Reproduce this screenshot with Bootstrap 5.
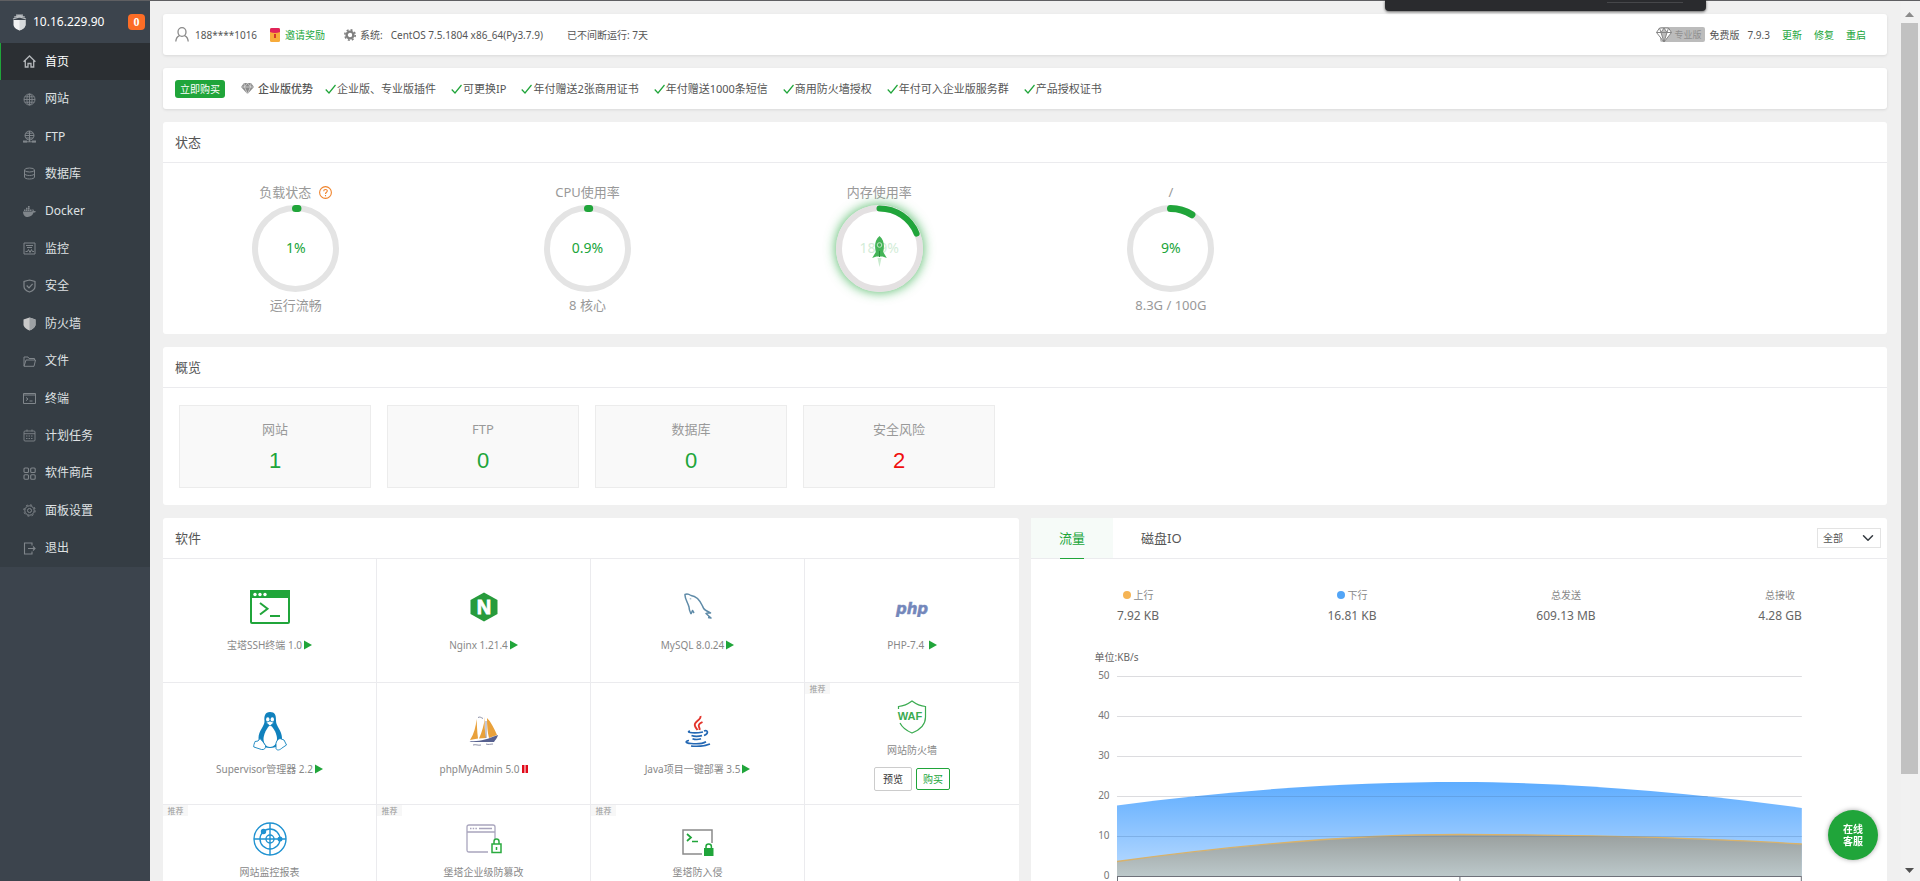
<!DOCTYPE html>
<html lang="zh-CN">
<head>
<meta charset="utf-8">
<meta name="viewport" content="width=device-width, initial-scale=1">
<title>宝塔面板</title>
<link href="https://cdn.jsdelivr.net/npm/bootstrap@5.3.0/dist/css/bootstrap.min.css" rel="stylesheet">
<style>
:root { --green: #20a53a; --line: #ebebee; }
body { font-family: "Noto Sans", "Noto Sans CJK SC", sans-serif; font-size: 12px; line-height: 20px; color: #555; background: #f0f0f0; border-top: 1px solid #5f5f62; }
a { text-decoration: none; color: inherit; }
svg { display: block; flex: none; }
.t-10 { font-size: 10px; }
.t-11 { font-size: 11px; }
.green { color: var(--green); }

.side { width: 150px; background: #3c444d; color: #fff; }
.side-head { height: 42px; padding: 0 5px 0 12px; gap: 6px; }
.side-head .num { width: 17px; border-radius: 4px; background: #fc6d26; font: bold 12px/16px "Liberation Serif", serif; text-align: center; }
.menu { height: 524px; background: #353d44; }
.menu a { display: flex; flex: 1; align-items: center; gap: 9px; padding-left: 22px; color: #dfe1e3; border-left: 1px solid transparent; }
.menu a svg { color: #80868b; }
.menu a.active { background: #2b2f33; color: #fff; border-left-color: var(--green); }
.menu a.active svg { color: #b4b7ba; }

.main { padding: 13px 14px 0 13px; gap: 13px; }
.panel { background: #fff; border-radius: 3px; }
.bar { height: 41px; padding: 0 21px 0 12px; box-shadow: 0 1px 3px rgba(0,0,0,.1); }
.panel-title { height: 41px; padding: 0 12px; border-bottom: 1px solid var(--line); line-height: 41px; font-size: 13px; }
.user { width: 80px; padding-left: 6px; }
.gear { margin-left: 19px; }
.perks { gap: 15px; }
.perks span { display: flex; align-items: center; gap: 1px; }
.btn-buy { background: var(--green); color: #fff; border: 0; border-radius: 3px; font-size: 10px; line-height: 18px; padding: 0 5px; }
.pro-tag { background: #bcbcbc; color: #8f8f8f; border-radius: 2px; font-size: 9px; line-height: 15px; padding: 0 4px 0 14px; margin-left: -12px; }

.rings { display: grid; grid-template-columns: repeat(6, 1fr); gap: 26px; padding: 19px 0; color: #999; font-size: 13px; text-align: center; }
.ring { width: 87px; height: 87px; margin: 3px auto; border-radius: 50%; position: relative; }
.ring span { position: absolute; inset: 0; line-height: 85px; font-size: 14px; color: var(--green); }
.ring.hot { box-shadow: 0 0 11px 1px rgba(32,165,58,.7), inset 0 0 3px rgba(32,165,58,.3); }
.ring.hot span { opacity: .2; }
.ring .rocket { position: absolute; left: 36px; top: 31px; }

.tiles { gap: 16px; padding: 17px 16px; }
.tile { width: 192px; border: 1px solid #ececec; background: #f9f9f9; padding: 13px 0 11px; text-align: center; color: #999; font-size: 13px; }
.tile b { display: block; margin-top: 7px; font: 22px/30px "Liberation Sans", sans-serif; color: var(--green); }
.tile b.warn { color: #f00f0f; }

.halves { display: grid; grid-template-columns: 1fr 1fr; gap: 12px; }
.soft { display: grid; grid-template-columns: repeat(4, 1fr); grid-template-rows: 124px; grid-auto-rows: 122px; font-size: 10px; color: #888; }
.soft > div { border-right: 1px solid var(--line); border-bottom: 1px solid var(--line); padding-top: 28px; display: flex; flex-direction: column; align-items: center; gap: 8px; position: relative; }
.soft > div:nth-child(4n) { border-right: 0; }
.soft > div.promo { padding-top: 14px; gap: 3px; }
.soft .pic { height: 40px; display: flex; align-items: center; }
.soft .tag { position: absolute; left: 0; top: 0; width: 25px; background: #f7f7f7; color: #999; font-size: 8px; line-height: 11px; text-align: center; }
.soft .label { display: flex; align-items: center; gap: 2px; }
.btn-mini { font-size: 10px; line-height: 20px; padding: 1px 8px; border-radius: 2px; border: 1px solid #ccc; background: #fff; color: #333; }
.btn-mini.go { border-color: var(--green); color: var(--green); padding: 0 6px; }

.tabs { height: 41px; border-bottom: 1px solid var(--line); font-size: 13px; padding-right: 6px; }
.tabs button { border: 0; background: none; height: 40px; padding: 0 28px; color: #555; position: relative; }
.tabs button.active { background: #f6fbf8; color: var(--green); }
.tabs button.active::after { content: ""; position: absolute; left: 29px; right: 29px; bottom: -1px; height: 1px; background: var(--green); }
.pick { width: 64px; height: 20px; padding: 0 5px; border: 1px solid #e3e3e3; border-radius: 0; font-size: 10px; line-height: 18px; color: #555; background-position: right 6px center; background-size: 12px 12px; }
.stats { padding-top: 26px; }
.stats .col { color: #888; font-size: 10px; text-align: center; }
.stats .col strong { display: block; font-weight: 400; font-size: 12px; line-height: 22px; color: #666; }
.dot { width: 8px; height: 8px; border-radius: 50%; display: inline-block; margin-right: 3px; }
.unit { margin-top: 22px; padding-left: calc(10% - 22px); font-size: 10px; line-height: 16px; color: #666; }
.chart { display: grid; grid-template-columns: 10% 1fr 10%; }
.chart .ticks { display: flex; flex-direction: column; gap: 20px; padding-right: 7px; text-align: right; font-size: 10px; color: #777; }
.chart svg { width: 100%; height: 206px; margin-top: 11px; overflow: visible; }
.chart path { vector-effect: non-scaling-stroke; }

.track { width: 19px; padding: 11px 2px 8px 0; background: #f1f1f1; }
.track i { display: block; width: 17px; height: 751px; margin: 6px 0 auto; background: #c1c1c1; }
.help { position: fixed; right: 42px; bottom: 21px; width: 50px; height: 50px; border: 0; border-radius: 50%; background: var(--green); color: #fff; font-size: 10px; font-weight: 700; line-height: 12px; box-shadow: 0 0 5px rgba(0,0,0,.35); z-index: 3; }
.notice { position: fixed; top: 0; right: 214px; width: 321px; height: 11px; background: #2a2b2e; border-radius: 0 0 4px 4px; box-shadow: 0 1px 3px rgba(0,0,0,.6); z-index: 3; padding: 2px 23px; }
.notice i { display: block; width: 76px; height: 1px; margin-left: auto; background: #46474a; }
</style>
</head>
<body class="vh-100 overflow-hidden d-flex">

<svg class="d-none" aria-hidden="true">
  <symbol id="play" viewBox="0 0 8 10"><path d="M0 0.500 8 5 0 9.500z" fill="#20a53a"/></symbol>
  <symbol id="tick" viewBox="0 0 11 10"><path d="M.7 5.500 4 9 10.500 1" fill="none" stroke="#20a53a" stroke-width="1.200"/></symbol>
</svg>

<nav class="side flex-shrink-0">
  <div class="side-head d-flex align-items-center">
    <svg width="15" height="17" viewBox="0 0 15 17"><path d="M1.500 6h12v4.500c0 3-3 5-6 6-3-1-6-3-6-6z" fill="#f2f2f2"/><path d="M7.500 6h6v4.500c0 3-3 5-6 6z" fill="#d5d8da"/><path d="M1 5 7.500 3 14 5M2 3l5.500-1L13 3M4 1.200h7" stroke="#b9bdc1" fill="none" stroke-width="1.200"/></svg>
    <span class="me-auto">10.16.229.90</span><span class="num">0</span>
  </div>
  <div class="menu d-flex flex-column">
    <a href="#" class="active"><svg width="13" height="13" viewBox="0 0 13 13" fill="none" stroke="currentColor" stroke-width="1.300"><path d="M.6 6.800 6.500 1l5.900 5.800M2.300 5.500v6.500h2.700V8.500h3V12h2.700V5.500"/></svg>首页</a>
    <a href="#"><svg width="13" height="13" viewBox="0 0 13 13" fill="none" stroke="currentColor" stroke-width=".9"><circle cx="6.500" cy="6.500" r="5.500"/><ellipse cx="6.500" cy="6.500" rx="2.600" ry="5.500"/><path d="M6.500 1v11M1 6.500h11M1.800 3.800h9.400M1.800 9.200h9.400"/></svg>网站</a>
    <a href="#"><svg width="13" height="13" viewBox="0 0 13 13" fill="none" stroke="currentColor"><circle cx="6.500" cy="5.500" r="4.500"/><path d="M6.500 1v11M2 5.500h9M3 3.200h7M3 8h7M.5 11.800h12"/><path d="M0 10.500h4v2H0zM9 10.500h4v2H9z" fill="currentColor" stroke="none"/></svg>FTP</a>
    <a href="#"><svg width="13" height="13" viewBox="0 0 13 13" fill="none" stroke="currentColor"><ellipse cx="6.500" cy="3" rx="5" ry="2"/><path d="M1.500 3v7c0 1.200 2 2 5 2s5-.8 5-2V3M1.500 6.500c0 1.200 2 2 5 2s5-.8 5-2"/></svg>数据库</a>
    <a href="#"><svg width="13" height="13" viewBox="0 0 13 13" fill="currentColor"><path d="M0 6.500h9.200c.4-.2.600-1.800.2-2.500 1 .3 1.400 1.200 1.500 2 .8-.2 1.700 0 2.100.4-.5.900-1.400 1.200-2.400 1.200C9.500 10.500 7.500 12 4.800 12 1.800 12 0 10 0 6.500zM1 4.600h1.600V6H1zM3 4.600h1.600V6H3zM5 4.600h1.600V6H5zM7 4.600h1.500V6H7zM3 2.800h1.600v1.400H3zM5 2.800h1.600v1.400H5zM5 1h1.600v1.400H5z"/></svg>Docker</a>
    <a href="#"><svg width="13" height="13" viewBox="0 0 13 13" fill="none" stroke="currentColor"><path d="M1 1h11v11H1zM3 3.500h7M4 5.500h5M2.500 9.500h2l1-2 1.500 3 1.500-3 .8 2h1.700"/></svg>监控</a>
    <a href="#"><svg width="13" height="14" viewBox="0 0 13 14" fill="none" stroke="currentColor" stroke-width="1.200"><path d="M6.500 1 12 2.500v5c0 2.500-2.500 4.500-5.500 5.500C3.500 12 1 10 1 7.500v-5z"/><path d="m3.700 6.500 2.300 2.300 3.600-4"/></svg>安全</a>
    <a href="#"><svg width="13" height="14" viewBox="0 0 13 14"><path d="M6.500 .500 12.500 2.500v5c0 2.500-3 5-6 6-3-1-6-3.500-6-6v-5z" fill="#c9c9c9"/><path d="M6.500 .500 12.500 2.500v5c0 2.500-3 5-6 6z" fill="#9da1a4"/></svg>防火墙</a>
    <a href="#"><svg width="13" height="13" viewBox="0 0 13 13" fill="none" stroke="currentColor"><path d="M1 11V2h4l1 1.500h5.500V5M1 11.300 3 5h9.500l-1.500 6.300z"/></svg>文件</a>
    <a href="#"><svg width="13" height="13" viewBox="0 0 13 13" fill="none" stroke="currentColor"><path d="M.5 1.500h12v10H.5zM.5 3h12M3 5.500l2 1.500-2 1.700M6.500 9h3"/></svg>终端</a>
    <a href="#"><svg width="13" height="13" viewBox="0 0 13 13" fill="none" stroke="currentColor" stroke-width=".9"><rect x="1" y="2" width="11" height="10" rx="1"/><path d="M1 4.700h11M4 .5v2M9 .5v2"/><path d="M3 7h7.500M3 9.500h7.500" stroke-dasharray="1.500 1"/></svg>计划任务</a>
    <a href="#"><svg width="13" height="13" viewBox="0 0 13 13" fill="none" stroke="currentColor" stroke-width="1.100"><rect x="1" y="1" width="4.500" height="4.500" rx="1"/><rect x="7.700" y="1" width="4.500" height="4.500" rx="1"/><rect x="1" y="7.700" width="4.500" height="4.500" rx="1"/><rect x="7.700" y="7.700" width="4.500" height="4.500" rx="1"/></svg>软件商店</a>
    <a href="#"><svg width="13" height="13" viewBox="0 0 13 13" fill="none" stroke="currentColor"><circle cx="6.500" cy="6.500" r="4.700"/><circle cx="6.500" cy="6.500" r="2"/><circle cx="6.500" cy="6.500" r="5.700" stroke-dasharray="2 2.480"/></svg>面板设置</a>
    <a href="#"><svg width="13" height="13" viewBox="0 0 13 13" fill="none" stroke="currentColor" stroke-width="1.100"><path d="M9 3.500V1H1.500v11H9V9.500M5 6.500h7M10 4.500l2 2-2 2"/></svg>退出</a>
  </div>
</nav>

<main class="main flex-fill d-flex flex-column">
  <header class="panel bar d-flex align-items-center t-10 flex-shrink-0">
    <svg width="14" height="15" viewBox="0 0 14 15" fill="none" stroke="#8a8a8a" stroke-width="1.300"><ellipse cx="7" cy="5" rx="4" ry="4.300"/><path d="M.8 14.500C1 11.500 2.500 9.500 4.500 8.700M13.200 14.500C13 11.500 11.500 9.500 9.500 8.700"/></svg>
    <span class="user">188****1016</span>
    <svg width="12" height="14" viewBox="0 0 12 14"><rect x="1" width="10" height="14" rx="1.500" fill="#f7ab3a"/><path d="M1 1.500Q1 0 2.500 0h7Q11 0 11 1.500V4Q6 6 1 4z" fill="#e0235a"/><path d="M5 6h2v4H5z" fill="#d23b2a"/></svg>
    <a href="#" class="green ms-1">邀请奖励</a>
    <svg class="gear" width="12" height="12" viewBox="0 0 12 12"><circle cx="6" cy="6" r="3.400" fill="none" stroke="#808080" stroke-width="2.400"/><circle cx="6" cy="6" r="5.200" fill="none" stroke="#808080" stroke-width="1.600" stroke-dasharray="2 2.080"/></svg>
    <span class="ms-1">系统:</span><span class="ms-2">CentOS 7.5.1804 x86_64(Py3.7.9)</span>
    <span class="ms-4 me-auto">已不间断运行: 7天</span>
    <svg class="position-relative" width="16" height="16" viewBox="0 0 16 16" fill="#fff" stroke="#858585"><path d="M3.500 1h9L15.500 5.500 8 15 .5 5.500zM.5 5.500h15M5 5.500 8 15l3-9.500L8 1 5 5.500 3.500 1M11 5.500 12.500 1"/></svg>
    <span class="pro-tag">专业版</span>
    <span class="mx-1">免费版</span><span class="ms-1">7.9.3</span>
    <a href="#" class="green ms-2 ps-1">更新</a><a href="#" class="green ms-2 ps-1">修复</a><a href="#" class="green ms-2 ps-1">重启</a>
  </header>

  <section class="panel bar d-flex align-items-center t-11 flex-shrink-0">
    <button class="btn-buy me-3">立即购买</button>
    <svg width="13" height="11" viewBox="0 0 13 11"><path d="M3 0h7l3 4-6.500 7L0 4z" fill="#8a8a8a"/><path d="M0 4h13M3.500 4l3 7 3-7L6.500 0l-3 4M3 0l.5 4M10 0l-.5 4" stroke="#ddd" stroke-width=".7" fill="none"/></svg>
    <span class="me-2 pe-1 ps-1 fw-medium">企业版优势</span>
    <div class="perks d-flex">
      <span><svg width="11" height="10"><use href="#tick"/></svg>企业版、专业版插件</span>
      <span><svg width="11" height="10"><use href="#tick"/></svg>可更换IP</span>
      <span><svg width="11" height="10"><use href="#tick"/></svg>年付赠送2张商用证书</span>
      <span><svg width="11" height="10"><use href="#tick"/></svg>年付赠送1000条短信</span>
      <span><svg width="11" height="10"><use href="#tick"/></svg>商用防火墙授权</span>
      <span><svg width="11" height="10"><use href="#tick"/></svg>年付可入企业版服务群</span>
      <span><svg width="11" height="10"><use href="#tick"/></svg>产品授权证书</span>
    </div>
  </section>

  <section class="panel flex-shrink-0">
    <div class="panel-title">状态</div>
    <div class="rings">
      <div>
        <div class="d-flex justify-content-center align-items-center gap-2">负载状态
          <svg width="13" height="13" viewBox="0 0 13 13" fill="none" stroke="#f0842c" stroke-width="1.100"><circle cx="6.500" cy="6.500" r="5.900"/><path d="M4.700 5.200c0-2.400 3.700-2.200 3.600-.2C8.200 6.300 6.500 6.300 6.500 8M6.500 9v1.200"/></svg></div>
        <div class="ring"><svg width="87" height="87" viewBox="0 0 87 87" fill="none"><circle cx="43.500" cy="43.500" r="40.500" stroke="#e4e4e4" stroke-width="6"/><circle cx="43.500" cy="43.500" r="40" stroke="#20a53a" stroke-width="7" stroke-linecap="round" pathLength="100" stroke-dasharray="1 99" transform="rotate(-90 43.500 43.500)"/></svg><span>1%</span></div>
        <div>运行流畅</div>
      </div>
      <div>
        <div>CPU使用率</div>
        <div class="ring"><svg width="87" height="87" viewBox="0 0 87 87" fill="none"><circle cx="43.500" cy="43.500" r="40.500" stroke="#e4e4e4" stroke-width="6"/><circle cx="43.500" cy="43.500" r="40" stroke="#20a53a" stroke-width="7" stroke-linecap="round" pathLength="100" stroke-dasharray=".9 99.100" transform="rotate(-90 43.500 43.500)"/></svg><span>0.9%</span></div>
        <div>8 核心</div>
      </div>
      <div>
        <div>内存使用率</div>
        <div class="ring hot"><svg width="87" height="87" viewBox="0 0 87 87" fill="none"><circle cx="43.500" cy="43.500" r="40.500" stroke="#e4e1e2" stroke-width="6"/><circle cx="43.500" cy="43.500" r="40" stroke="#20a53a" stroke-width="6" stroke-linecap="round" pathLength="100" stroke-dasharray="18.900 81.100" transform="rotate(-90 43.500 43.500)"/></svg><span>18.9%</span>
          <svg class="rocket" width="15" height="31" viewBox="0 0 15 31"><path d="M7.500 0c5 4.500 5 10 3.700 16l3.600 6-4.200-1.500H4.400L.2 22l3.600-6C2.500 10 2.500 4.500 7.500 0z" fill="#43b457"/><circle cx="7.500" cy="9" r="2.300" fill="none" stroke="#bfe6c5"/><path d="M7.500 15v6" stroke="#2b8d3e"/><path d="M5.500 22h4l-2 9z" fill="#c9ebcf"/></svg></div>
      </div>
      <div>
        <div>/</div>
        <div class="ring"><svg width="87" height="87" viewBox="0 0 87 87" fill="none"><circle cx="43.500" cy="43.500" r="40.500" stroke="#e4e4e4" stroke-width="6"/><circle cx="43.500" cy="43.500" r="40" stroke="#20a53a" stroke-width="7" stroke-linecap="round" pathLength="100" stroke-dasharray="9 91" transform="rotate(-90 43.500 43.500)"/></svg><span>9%</span></div>
        <div>8.3G / 100G</div>
      </div>
    </div>
  </section>

  <section class="panel flex-shrink-0">
    <div class="panel-title">概览</div>
    <div class="tiles d-flex">
      <a href="#" class="tile">网站<b>1</b></a>
      <a href="#" class="tile">FTP<b>0</b></a>
      <a href="#" class="tile">数据库<b>0</b></a>
      <a href="#" class="tile">安全风险<b class="warn">2</b></a>
    </div>
  </section>

  <div class="halves flex-fill">
    <section class="panel">
      <div class="panel-title">软件</div>
      <div class="soft">
        <div><div class="pic"><svg width="40" height="34" viewBox="0 0 40 34"><rect x="1" y="1" width="38" height="32" rx="1" fill="#fff" stroke="#20a53a" stroke-width="2"/><path d="M0 0h40v8H0z" fill="#20a53a"/><g fill="#fff"><circle cx="5" cy="4.500" r="1.700"/><circle cx="10" cy="4.500" r="1.700"/><circle cx="15" cy="4.500" r="1.700"/></g><path d="m10 13 7.500 5.700L10 24.500M20 26h10" fill="none" stroke="#20a53a" stroke-width="2"/></svg></div>
          <span class="label">宝塔SSH终端 1.0<svg width="8" height="10"><use href="#play"/></svg></span></div>
        <div><div class="pic"><svg width="28" height="30" viewBox="0 0 28 30"><path d="M14 .5 27.500 8v14L14 29.500.500 22V8z" fill="#279b3c"/><text x="14" y="22" text-anchor="middle" font-family="Liberation Sans" font-weight="bold" font-size="20" fill="#fff" stroke="#fff" stroke-width=".8">N</text></svg></div>
          <span class="label">Nginx 1.21.4<svg width="8" height="10"><use href="#play"/></svg></span></div>
        <div><div class="pic"><svg width="28" height="28" viewBox="0 0 28 28" fill="none" stroke="#5f8ba8" stroke-width="1.500" stroke-linejoin="round"><path d="M7 21c-1-2-2-4-2-7C3.500 9 .500 5 1 1.500 3 .5 5.500 1.500 7 2.500c5 .5 9 5 11.500 10.500.8 2.500 2 4 3.500 4.500l4.500 2.500c-2 .2-4 0-4.500.5l5 4.500-3-.5M7 21l1.500-3.500 1.500 2.500M6.500 5.500v.8"/></svg></div>
          <span class="label">MySQL 8.0.24<svg width="8" height="10"><use href="#play"/></svg></span></div>
        <div><div class="pic"><svg width="36" height="20" viewBox="0 0 36 20"><text x="18" y="17" text-anchor="middle" font-family="DejaVu Sans" font-weight="bold" font-style="italic" font-size="15" fill="#7487bb" stroke="#7487bb" stroke-width=".5">php</text></svg></div>
          <span class="label">PHP-7.4&nbsp;<svg width="8" height="10"><use href="#play"/></svg></span></div>

        <div><div class="pic"><svg width="34" height="40" viewBox="0 0 34 40"><path d="M17 1c-5 0-6 4-5.500 9 .2 5-6 10-6 17 0 5 4 10 11.500 10s12-5 12-10c0-7-6-12-6-17C23.200 4 22 1 17 1z" fill="#1081bd"/><path d="M17 14c-3 3-6.500 9-6.500 14s3 8 6.500 8 7-3 7-8-3-11-7-14z" fill="#fff"/><ellipse cx="14.800" cy="8.500" rx="1.700" ry="2.300" fill="#fff"/><ellipse cx="19.300" cy="8.500" rx="1.700" ry="2.300" fill="#fff"/><path d="m13 11.500 4-1.500 4 1.500-4 3.500z" fill="#fff" stroke="#1081bd" stroke-width=".7"/><path d="M7 27.500c2 2 4 4.500 5.500 7 .5 3-1.500 4.500-4 4L.8 36c-.5-1.500.8-4 1.200-5.500l3-.5zM27 27.500c-2 .5-4 3-4 5v5c1 2.500 4 1.500 6-.5l4.500-3-2.500-5z" fill="#fff" stroke="#1081bd" stroke-width=".9"/></svg></div>
          <span class="label">Supervisor管理器 2.2<svg width="8" height="10"><use href="#play"/></svg></span></div>
        <div><div class="pic"><svg width="30" height="32" viewBox="0 0 30 32"><path d="M7.500 4C7 11 5 19 1 25l8-1.500C8 16 8 9 7.500 4zM16 2c-1 8-3 15-6 21.500l7-.5c-1.500-7-1.500-14-1-21zM18 3c0 8 .5 14 2 20l8-3C25 13 22 7 18 3z" fill="#e9a13b"/><path d="M.5 26c9 1 17-1.500 28.500-6-.5 3-3 5-4 7H2z" fill="#56608f"/><path d="M9 2.500c2-1 3 0 5 1M4 30c3-1 5 .8 8 0M17 29c3 1 4 0 7 0M17 6v17" stroke="#8c90a8" fill="none"/></svg></div>
          <span class="label">phpMyAdmin 5.0<svg width="6" height="8" viewBox="0 0 6 8"><path d="M0 0h2.500v8H0zM3.500 0H6v8H3.500z" fill="#e20a1a"/></svg></span></div>
        <div><div class="pic"><svg width="26" height="32" viewBox="0 0 26 32" fill="none"><path d="M15.500 1c1 4-7.500 6-5.500 10 .5 1.800 2 3 2.500 4M17.500 7c-2 1-4.800 2.500-3.500 5 .5 1 1 1.500.5 3" stroke="#e3352c" stroke-width="1.900"/><path d="M5 16c-2 .3-2 1.300 0 1.500 4 .8 9 .3 13-.5M19 16c4-1.500 5 2.500 0 4.500M6.500 20.500c3 1.200 7 1 10.500.2M7.500 23.700c2.500 1 6 .9 8.500.1M4 25.500c-4 .5-4 2.800 2 3 6 .6 12 0 15-1.800M6 31c6 .7 13 .3 19-2" stroke="#2468b4" stroke-width="1.700"/></svg></div>
          <span class="label">Java项目一键部署 3.5<svg width="8" height="10"><use href="#play"/></svg></span></div>
        <div class="promo"><span class="tag">推荐</span><div class="pic"><svg width="30" height="34" viewBox="0 0 30 34"><path d="M1.500 9V6.500C7 6 11 4 15 1c4 3 8 5 13.500 5.500V17c0 8-6 13-13.500 16-6-2.500-10-6-12-10" fill="none" stroke="#3aab50" stroke-width="1.200"/><text x="13" y="20" text-anchor="middle" font-family="Liberation Sans" font-weight="bold" font-size="11" fill="#3aab50">WAF</text></svg></div>
          <span class="label">网站防火墙</span>
          <div class="d-flex align-items-center gap-1 mt-1"><button class="btn-mini">预览</button><button class="btn-mini go">购买</button></div></div>

        <div class="promo"><span class="tag">推荐</span><div class="pic"><svg width="34" height="34" viewBox="0 0 34 34" fill="none" stroke="#1f92d1" stroke-width="1.400"><circle cx="17" cy="17" r="16"/><circle cx="17" cy="17" r="10"/><circle cx="17" cy="17" r="4"/><path d="M17 1v32M1 17h32"/><circle cx="10.500" cy="9.500" r="2" fill="#1f92d1"/><circle cx="27" cy="17" r="1.800" fill="#1f92d1"/></svg></div>
          <span class="label">网站监控报表</span></div>
        <div class="promo"><span class="tag">推荐</span><div class="pic"><svg width="36" height="30" viewBox="0 0 36 30" fill="none" stroke="#a9a5bd" stroke-width="1.300"><path d="M22 28H3q-2 0-2-2V3q0-2 2-2h24q2 0 2 2v13M1 8h28M13 4.500h13"/><path d="M4 4.500h7" stroke-dasharray="1.500 1.200"/><path d="M26 20h9v8.500h-9zM28 20v-2.500q0-2.500 2.500-2.500t2.500 2.500V20M30.500 23v3" stroke="#2aab3f" stroke-width="1.500"/></svg></div>
          <span class="label">堡塔企业级防篡改</span></div>
        <div class="promo"><span class="tag">推荐</span><div class="pic pt-2"><svg width="32" height="28" viewBox="0 0 32 28" fill="none"><path d="M20 25H1V1h29v13" stroke="#8b8b8b" stroke-width="1.500"/><path d="m5 5 4 3.500L5 12M10 12.500h6" stroke="#20a53a" stroke-width="1.700"/><path d="M22 19h9.500v8H22z" fill="#20a53a"/><path d="M24 19v-1.500q0-2.500 2.700-2.500t2.700 2.500V19" stroke="#20a53a" stroke-width="1.500"/></svg></div>
          <span class="label">堡塔防入侵</span></div>
        <div></div>
      </div>
    </section>

    <section class="panel">
      <div class="tabs d-flex align-items-center">
        <button class="active">流量</button><button>磁盘IO</button>
        <select class="form-select pick ms-auto" aria-label="网卡"><option>全部</option></select>
      </div>
      <div class="stats d-flex">
        <div class="col"><i class="dot" style="background:#f5b455"></i>上行<strong>7.92 KB</strong></div>
        <div class="col"><i class="dot" style="background:#52a5f7"></i>下行<strong>16.81 KB</strong></div>
        <div class="col">总发送<strong>609.13 MB</strong></div>
        <div class="col">总接收<strong>4.28 GB</strong></div>
      </div>
      <div class="unit">单位:KB/s</div>
      <div class="chart">
        <div class="ticks"><span>50</span><span>40</span><span>30</span><span>20</span><span>10</span><span>0</span></div>
        <svg viewBox="0 0 684 206" preserveAspectRatio="none">
          <defs>
            <linearGradient id="down" gradientUnits="userSpaceOnUse" x1="0" y1="106" x2="0" y2="200"><stop offset="0" stop-color="#5dacff"/><stop offset="1" stop-color="#bcdcff"/></linearGradient>
            <linearGradient id="up" gradientUnits="userSpaceOnUse" x1="0" y1="158" x2="0" y2="200"><stop offset="0" stop-color="#999f9e"/><stop offset="1" stop-color="#bcc8ca"/></linearGradient>
          </defs>
          <path d="M0 .5h684M0 40.500h684M0 80.500h684M0 120.500h684M0 160.500h684" stroke="#dcdcdf"/>
          <path d="M0 129.500C120 113 240 106 342 106S570 116 684 132V200H0z" fill="url(#down)"/>
          <path d="M0 185.500C120 169 240 158.500 342 158.500S570 161 684 168V200H0z" fill="url(#up)"/>
          <path d="M0 185.500C120 169 240 158.500 342 158.500S570 161 684 168" fill="none" stroke="#d9b26a" stroke-width="1.300"/>
          <path d="M78 120.500h512M0 160.500h684" stroke="#4c7cae" stroke-opacity=".3"/>
          <path d="M0 200.500h684M.5 200v6M342.500 200v6M683.500 200v6" stroke="#6e7079"/>
        </svg>
      </div>
    </section>
  </div>
</main>

<div class="track flex-shrink-0 d-flex flex-column align-items-center" aria-hidden="true">
  <svg width="9" height="5" viewBox="0 0 9 5"><path d="M0 5 4.500 0 9 5z" fill="#8b8b8b"/></svg>
  <i></i>
  <svg width="9" height="5" viewBox="0 0 9 5"><path d="M0 0h9L4.500 5z" fill="#505050"/></svg>
</div>
<div class="notice"><i></i></div>
<button class="help">在线<br>客服</button>
<script src="https://cdn.jsdelivr.net/npm/bootstrap@5.3.0/dist/js/bootstrap.bundle.min.js"></script>
</body>
</html>
